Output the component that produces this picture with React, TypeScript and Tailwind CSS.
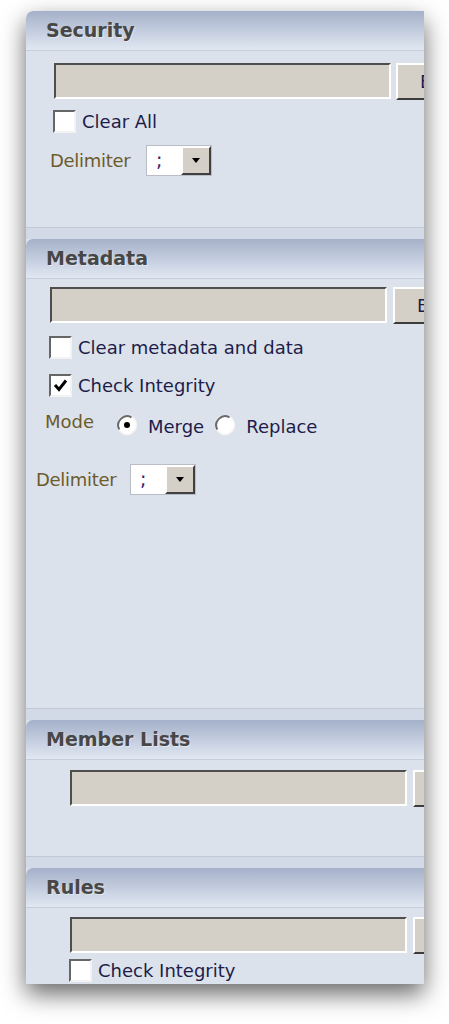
import React from "react";

const ink = "text-[#1d1c4a]";

function Header({ title }: { title: string }) {
  return (
    <div className="h-[40px] flex items-center pl-[20px] rounded-tl-[7px] bg-linear-to-b from-[#a5b1ca] to-[#e1e8f2] border-b border-[#c6ced9]">
      <span className="text-[19px] font-bold text-[#474747] [text-shadow:1px_1px_0_rgba(255,255,255,0.45)]">
        {title}
      </span>
    </div>
  );
}

function Gap() {
  return <div className="h-[12px] bg-[#d2dae7] border-t border-[#c1c9d4]" />;
}

function FileRow({ className }: { className: string }) {
  return (
    <div className={"flex items-start " + className}>
      <div className="w-[337px] h-[36px] shrink-0 bg-[#d4d0c8] border-2 border-t-[#4e4e4e] border-l-[#4e4e4e] border-b-white border-r-white" />
      <div className="h-[37px] w-[90px] shrink-0 bg-[#d4d0c8] border-2 border-t-white border-l-white border-r-[#3c3c3c] border-b-[#3c3c3c] pl-[22px] flex items-center text-[18px] text-[#1d1c4a]">
        Browse...
      </div>
    </div>
  );
}

function Check({ checked = false }: { checked?: boolean }) {
  return (
    <div className="w-[23px] h-[23px] shrink-0 bg-white border-2 border-t-[#666] border-l-[#666] border-b-[#f3f3f3] border-r-[#f3f3f3] flex items-center justify-center">
      {checked && (
        <svg width="15" height="15" viewBox="0 0 15 15">
          <path d="M2 7 L6 11.5 L13 2.5" stroke="#000" strokeWidth="3" fill="none" />
        </svg>
      )}
    </div>
  );
}

function CheckRow({ label, checked, className }: { label: string; checked?: boolean; className: string }) {
  return (
    <div className={"flex items-center h-[23px] " + className}>
      <Check checked={checked} />
      <span className={"text-[18px] ml-[6px] " + ink}>{label}</span>
    </div>
  );
}

function Radio({ on = false }: { on?: boolean }) {
  return (
    <svg width="22" height="22" viewBox="0 0 22 22" className="shrink-0">
      <circle cx="11" cy="11" r="9.5" fill="#fff" stroke="#f4f4f4" strokeWidth="1.5" />
      <path d="M3.3 15.5 A9 9 0 0 1 15.5 3.3" stroke="#6a6a6a" strokeWidth="2" fill="none" />
      {on && <circle cx="11" cy="11" r="3" fill="#000" />}
    </svg>
  );
}

function Delimiter({ className, labelW }: { className: string; labelW: string }) {
  return (
    <div className={"flex items-center h-[31px] " + className}>
      <span className={"text-[18px] tracking-[-0.3px] text-[#6d5b2c] " + labelW}>Delimiter</span>
      <div className="flex h-[31px] w-[66px] border border-[#b9bdc5]">
        <div className="w-[34px] bg-white pl-[9px] flex items-center text-[19px] text-[#3a1f6a]">;</div>
        <div className="flex-1 bg-[#d4d0c8] border-2 border-t-white border-l-white border-r-[#404040] border-b-[#404040] flex items-center justify-center">
          <svg width="10" height="6" viewBox="0 0 10 6">
            <path d="M1 0 H9 L5 5 Z" fill="#000" />
          </svg>
        </div>
      </div>
    </div>
  );
}

export default function App() {
  return (
    <div className="min-h-[1024px] bg-white pt-[11px] pl-[26px] font-['DejaVu_Sans',Verdana,sans-serif]">
      <div className="w-[398px] h-[973px] overflow-hidden bg-[#dbe2eb] rounded-tl-[7px] shadow-[0_10px_24px_rgba(0,0,0,0.6)]">
        {/* Security */}
        <Header title="Security" />
        <div className="h-[176px] pt-[12px]">
          <FileRow className="ml-[28px] gap-[5px]" />
          <CheckRow label="Clear All" className="ml-[27px] mt-[10px]" />
          <Delimiter className="ml-[24px] mt-[12px]" labelW="w-[96px]" />
        </div>
        <Gap />

        {/* Metadata */}
        <Header title="Metadata" />
        <div className="h-[429px] pt-[8px]">
          <FileRow className="ml-[24px] gap-[6px]" />
          <CheckRow label="Clear metadata and data" className="ml-[23px] mt-[12px]" />
          <CheckRow label="Check Integrity" checked className="ml-[23px] mt-[15px]" />
          <div className="flex items-center h-[22px] ml-[19px] mt-[17px]">
            <span className="text-[18px] text-[#6d5b2c] w-[71px] -mt-[8px]">Mode</span>
            <Radio on />
            <span className={"text-[18px] ml-[10px] mt-[2px] " + ink}>Merge</span>
            <div className="ml-[10px]">
              <Radio />
            </div>
            <span className={"text-[18px] ml-[10px] mt-[2px] " + ink}>Replace</span>
          </div>
          <Delimiter className="ml-[10px] mt-[28px]" labelW="w-[94px]" />
        </div>
        <Gap />

        {/* Member Lists */}
        <Header title="Member Lists" />
        <div className="h-[96px] pt-[10px]">
          <FileRow className="ml-[44px] gap-[6px]" />
        </div>
        <Gap />

        {/* Rules */}
        <Header title="Rules" />
        <div className="pt-[9px]">
          <FileRow className="ml-[44px] gap-[6px]" />
          <CheckRow label="Check Integrity" className="ml-[43px] mt-[5px]" />
        </div>
      </div>
    </div>
  );
}
